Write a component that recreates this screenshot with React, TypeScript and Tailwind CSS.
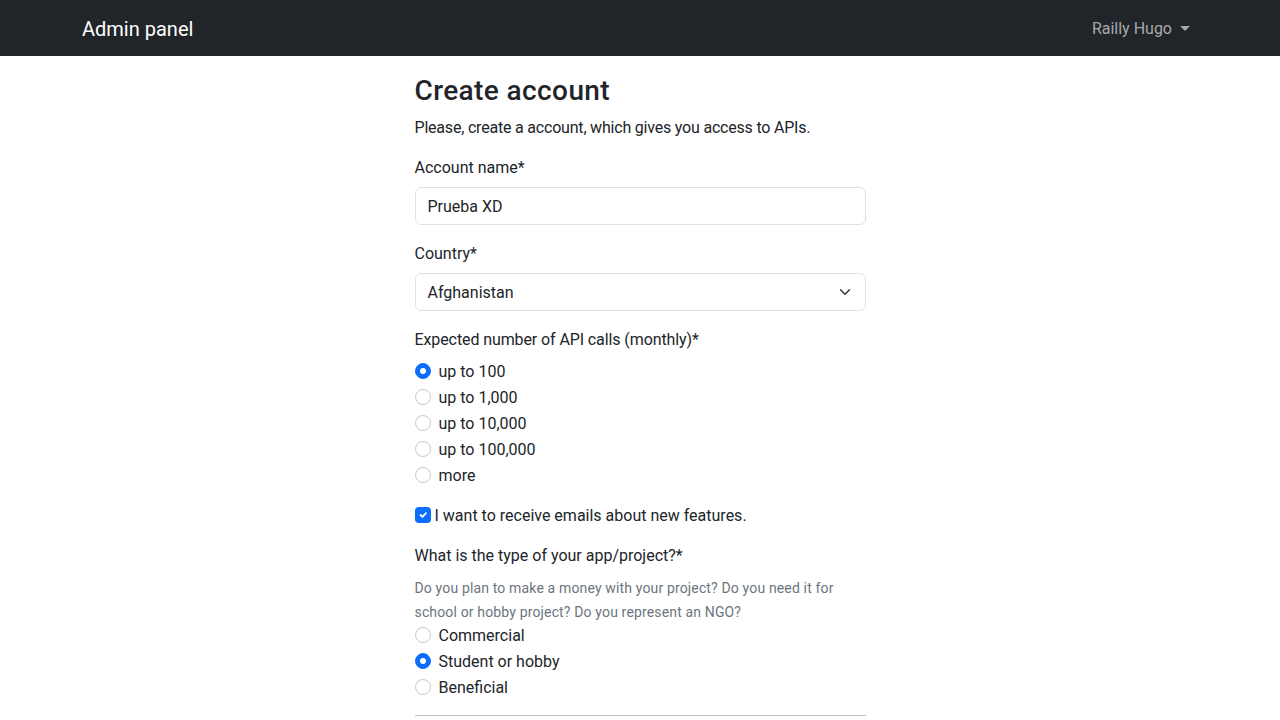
import React from "react";

const font = { fontFamily: 'Roboto, "Noto Sans", sans-serif' };

function Radio({ checked, label }: { checked?: boolean; label: string }) {
  return (
    <div className="flex items-center h-6">
      {checked ? (
        <span className="w-4 h-4 rounded-full bg-[#0d6efd] border border-[#0d6efd] flex items-center justify-center shrink-0">
          <span className="w-[6px] h-[6px] rounded-full bg-white" />
        </span>
      ) : (
        <span className="w-4 h-4 rounded-full border border-[#c6cacf] bg-white shrink-0" />
      )}
      <span className="ml-2 pt-[2px] text-[16px] text-[#212529]">{label}</span>
    </div>
  );
}

export default function App() {
  return (
    <div className="min-h-screen bg-white text-[#212529] leading-6" style={font}>
      <nav className="h-14 bg-[#212529] flex items-center">
        <div className="w-[1116px] mx-auto flex items-center justify-between">
          <span className="text-[20px] text-white leading-[30px] pt-[2px]">Admin panel</span>
          <span className="text-[16px] text-[#a6a8aa] flex items-center pr-2">
            <span className="pt-[2px]">Railly Hugo</span>
            <span className="ml-2 w-0 h-0 border-l-[5px] border-r-[5px] border-t-[5px] border-l-transparent border-r-transparent border-t-[#a6a8aa]" />
          </span>
        </div>
      </nav>
      <main className="w-[451px] mx-auto pt-[18px]">
        <h3 className="text-[28px] font-medium leading-[34px] mb-[7px] tracking-[0.4px]">Create account</h3>
        <p className="text-[16px] pt-[1px] mb-[15px] tracking-[-0.2px]">Please, create a account, which gives you access to APIs.</p>

        <div className="mb-4">
          <label className="block text-[16px] pt-[1px] mb-[7px]">Account name*</label>
          <div className="h-[38px] border border-[#dee2e6] rounded-[6px] px-3 flex items-center text-[16px]">
            <span className="pt-[2px]">Prueba XD</span>
          </div>
        </div>

        <div className="mb-4">
          <label className="block text-[16px] pt-[1px] mb-[7px]">Country*</label>
          <div className="h-[38px] border border-[#dee2e6] rounded-[6px] pl-3 pr-[14px] flex items-center justify-between text-[16px]">
            <span className="pt-[2px]">Afghanistan</span>
            <svg width="12" height="12" viewBox="0 0 16 16">
              <path d="m2 5 6 6 6-6" fill="none" stroke="#343a40" strokeWidth="2" strokeLinecap="round" strokeLinejoin="round" />
            </svg>
          </div>
        </div>

        <div className="mb-4">
          <label className="block text-[16px] pt-[1px] mb-[7px] tracking-[-0.1px]">Expected number of API calls (monthly)*</label>
          <div className="flex flex-col gap-[2px]">
            <Radio checked label="up to 100" />
            <Radio label="up to 1,000" />
            <Radio label="up to 10,000" />
            <Radio label="up to 100,000" />
            <Radio label="more" />
          </div>
        </div>

        <div className="mb-4 flex items-center h-6">
          <span className="w-4 h-4 rounded-[4px] bg-[#0d6efd] flex items-center justify-center shrink-0">
            <svg width="12" height="12" viewBox="0 0 20 20">
              <path d="m6 10 3 3 6-6" fill="none" stroke="#fff" strokeWidth="3" strokeLinecap="round" strokeLinejoin="round" />
            </svg>
          </span>
          <span className="ml-1 pt-[2px] text-[16px]">I want to receive emails about new features.</span>
        </div>

        <div className="mb-4">
          <label className="block text-[16px] pt-[1px] mb-[7px]">What is the type of your app/project?*</label>
          <p className="text-[14px] text-[#6c757d] leading-6 mt-[3px] pt-[1px] -mb-px tracking-[0.15px]">
            Do you plan to make a money with your project? Do you need it for school or hobby project? Do you represent an NGO?
          </p>
          <div className="flex flex-col gap-[2px]">
            <Radio label="Commercial" />
            <Radio checked label="Student or hobby" />
            <Radio label="Beneficial" />
          </div>
        </div>
        <hr className="border-0 border-t border-[#bfbfbf] mt-0" />
      </main>
    </div>
  );
}
